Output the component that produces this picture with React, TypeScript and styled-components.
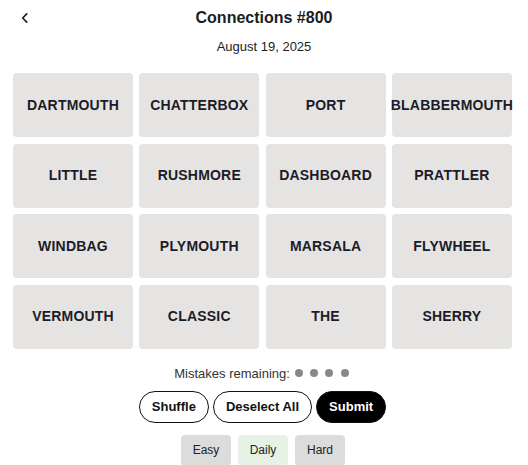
import React from 'react';
import styled, { createGlobalStyle, css } from 'styled-components';

const GlobalStyle = createGlobalStyle`
  body {
    margin: 0;
    background: #ffffff;
    font-family: "Liberation Sans", Arial, sans-serif;
    color: #1c1c24;
  }
`;

const Page = styled.div`
  width: 528px;
  display: flex;
  flex-direction: column;
  align-items: center;
`;

const Header = styled.div`
  width: 100%;
  height: 36px;
  display: flex;
  align-items: center;
  justify-content: center;
  position: relative;
`;

const BackButton = styled.button`
  position: absolute;
  left: 16px;
  top: 9px;
  width: 18px;
  height: 18px;
  padding: 0;
  border: none;
  background: none;
  display: flex;
  align-items: center;
  justify-content: center;
  color: #222;
`;

const Title = styled.h1`
  margin: 0;
  font-size: 16px;
  font-weight: 700;
  color: #1c1c24;
`;

const DateLine = styled.div`
  margin-top: 3px;
  height: 16px;
  line-height: 16px;
  font-size: 13px;
  color: #1c1c24;
`;

const Grid = styled.div`
  margin-top: 18px;
  width: 499px;
  margin-left: -3px;
  display: grid;
  grid-template-columns: repeat(4, 120px);
  grid-auto-rows: 64px;
  column-gap: 6.3px;
  row-gap: 6.5px;
`;

const Tile = styled.button`
  border: none;
  border-radius: 4px;
  background: #e5e4e2;
  display: flex;
  align-items: center;
  justify-content: center;
  padding: 0 0 1px;
  font-family: "Liberation Sans", Arial, sans-serif;
  font-size: 14px;
  font-weight: 700;
  letter-spacing: 0.2px;
  color: #1c1c28;
  white-space: nowrap;
  overflow: visible;
`;

const Mistakes = styled.div`
  margin-top: 17px;
  display: flex;
  align-items: center;
  gap: 5px;
  font-size: 13px;
  color: #333;
  margin-left: -5px;
`;

const Dots = styled.div`
  display: flex;
  gap: 7.3px;
`;

const Dot = styled.span`
  width: 8px;
  height: 8px;
  border-radius: 50%;
  background: #888888;
`;

const Actions = styled.div`
  margin-top: 10px;
  display: flex;
  gap: 4px;
  margin-left: -3px;
`;

const Pill = styled.button<{ primary?: boolean }>`
  height: 32px;
  padding: 0 12px;
  border-radius: 16px;
  border: 1px solid #111;
  background: #fff;
  color: #111;
  font-family: "Liberation Sans", Arial, sans-serif;
  font-size: 13px;
  font-weight: 700;

  ${({ primary }) => primary && css`
    background: #000;
    color: #fff;
  `}
`;

const Modes = styled.div`
  margin-top: 12px;
  display: flex;
  gap: 7px;
  margin-left: -2px;
`;

const ModeButton = styled.button<{ active?: boolean }>`
  width: 50px;
  height: 31px;
  border: none;
  border-radius: 4px;
  background: #dcdcdc;
  color: #222;
  font-family: "Liberation Sans", Arial, sans-serif;
  font-size: 12px;
  padding: 0;

  ${({ active }) => active && css`
    background: #e5f2e5;
  `}
`;

const words = [
  'DARTMOUTH', 'CHATTERBOX', 'PORT', 'BLABBERMOUTH',
  'LITTLE', 'RUSHMORE', 'DASHBOARD', 'PRATTLER',
  'WINDBAG', 'PLYMOUTH', 'MARSALA', 'FLYWHEEL',
  'VERMOUTH', 'CLASSIC', 'THE', 'SHERRY',
];

const App: React.FC = () => {
  return (
    <Page>
      <GlobalStyle />
      <Header>
        <BackButton aria-label='Back'>
          <svg width='14' height='14' viewBox='0 0 24 24' fill='none' stroke='currentColor' strokeWidth='3' strokeLinecap='round' strokeLinejoin='round'>
            <path d='M15 5l-7 7 7 7' />
          </svg>
        </BackButton>
        <Title>Connections #800</Title>
      </Header>
      <DateLine>August 19, 2025</DateLine>

      <Grid>
        {words.map((w) => (
          <Tile key={w}>{w}</Tile>
        ))}
      </Grid>

      <Mistakes>
        Mistakes remaining:
        <Dots>
          {[0, 1, 2, 3].map((i) => <Dot key={i} />)}
        </Dots>
      </Mistakes>

      <Actions>
        <Pill>Shuffle</Pill>
        <Pill>Deselect All</Pill>
        <Pill primary>Submit</Pill>
      </Actions>

      <Modes>
        <ModeButton>Easy</ModeButton>
        <ModeButton active>Daily</ModeButton>
        <ModeButton>Hard</ModeButton>
      </Modes>
    </Page>
  );
};

export default App;
